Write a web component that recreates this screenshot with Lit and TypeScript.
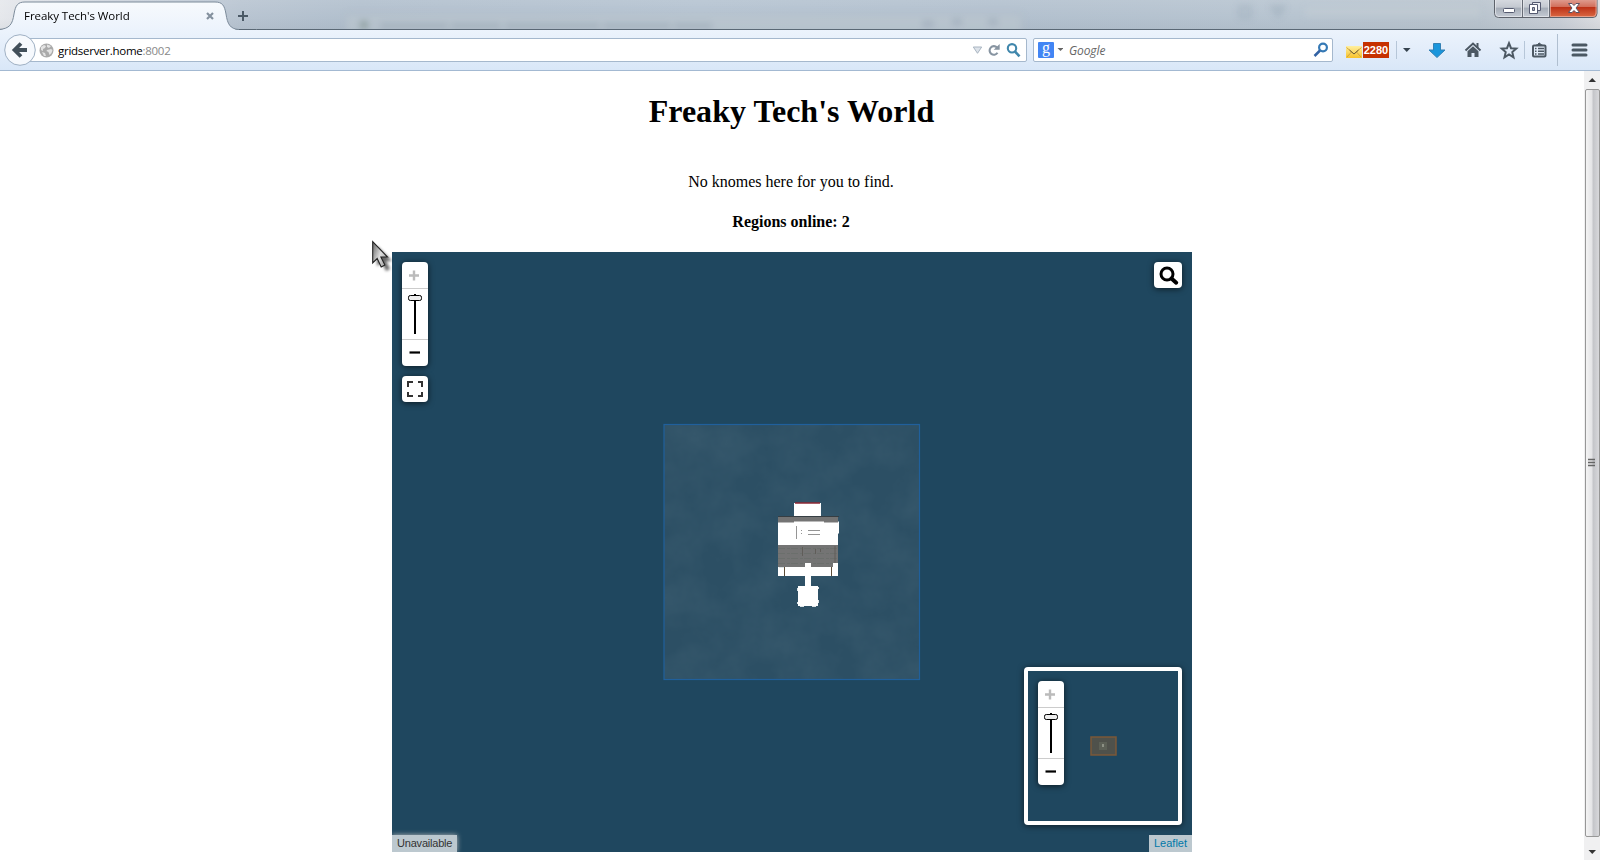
import { LitElement, html, css, svg } from "lit";
import { customElement } from "lit/decorators.js";

/** Zoom in / slider / zoom out stack used by the map and its overview. */
@customElement("zoom-slider")
export class ZoomSlider extends LitElement {
  static styles = css`
    :host {
      display: flex;
      flex-direction: column;
      width: 26px;
      height: 104px;
      background: #fff;
      border-radius: 4px;
      box-shadow: 0 1px 6px rgba(0, 0, 0, 0.65);
    }
    .end { height: 26px; }
    .track { height: 50px; border-top: 1px solid #ccc; border-bottom: 1px solid #ccc; }
    svg { display: block; }
  `;
  render() {
    return html`
      <div class="end">
        <svg width="26" height="26"><path d="M7 13.500h10M12 8.500v10" stroke="#bbb" stroke-width="2.400" fill="none" /></svg>
      </div>
      <div class="track">
        <svg width="26" height="50">
          <path d="M13 5v40" stroke="#000" stroke-width="2" />
          <rect x="6.5" y="6.5" width="13" height="5" rx="1.8" fill="#eee" stroke="#000" />
        </svg>
      </div>
      <div class="end">
        <svg width="26" height="26"><path d="M7.500 12.500h10.500" stroke="#000" stroke-width="2.200" /></svg>
      </div>
    `;
  }
}

@customElement("browser-chrome")
export class BrowserChrome extends LitElement {
  static styles = css`
    :host {
      display: block;
      height: 71px;
      font-family: "Open Sans", "Noto Sans", sans-serif;
      font-size: 12px;
    }
    svg { display: block; flex: none; }
    .strip {
      position: relative;
      height: 30px;
      overflow: hidden;
      display: flex;
      background:
        linear-gradient(180deg, rgba(255, 255, 255, 0.1), rgba(255, 255, 255, 0) 60%, rgba(70, 85, 95, 0.06)),
        linear-gradient(90deg, #e6e8ec 0, #d6dbe2 60px, #b8c4d1 240px, #b1bfcd 360px, #b5c3d1 700px, #b2c0ce 1000px, #b7c4d0 1300px, #b9c4ce 1480px, #c9ced6 1560px, #dcdde1 1600px);
    }
    .ghost { position: absolute; left: 340px; top: 0; }
    .tab { position: relative; width: 240px; height: 30px; display: flex; align-items: center; }
    .shape { position: absolute; left: 0; top: 0; }
    .title {
      position: relative;
      margin-left: 24px;
      width: 182px;
      line-height: 16px;
      padding-top: 2px;
      color: #000;
      font-size: 11.5px;
      letter-spacing: -0.06px;
      white-space: nowrap;
    }
    .x { position: relative; margin-top: 2px; }
    .plus { margin: 10px 0 0 -3px; position: relative; }
    .wins { margin-left: auto; margin-right: 2px; }
    .bar {
      box-sizing: border-box;
      height: 41px;
      border-bottom: 1px solid #a3b9d2;
      background: linear-gradient(#ecf3fc, #d9e7f8);
      display: flex;
      align-items: flex-start;
      padding: 8px 13px 0 4px;
    }
    .back { margin-top: -4px; position: relative; z-index: 1; }
    .field {
      box-sizing: border-box;
      height: 24px;
      border: 1px solid #a5b8cd;
      border-radius: 2px;
      background: #fff;
      display: flex;
      align-items: center;
    }
    .url { width: 1003px; margin-left: -12px; padding-left: 14px; }
    .addr { margin-left: 4px; padding-top: 1px; flex: 1; line-height: 16px; white-space: nowrap; color: #000; font-size: 11.5px; letter-spacing: -0.27px; }
    .port { color: #888; }
    .search { width: 300px; margin-left: 6px; padding-left: 4px; }
    .g {
      width: 16px;
      height: 16px;
      border-radius: 1px;
      background: #4285f4;
      color: #fff;
      font: 16px/12px "Liberation Serif", serif;
      text-align: center;
    }
    .hint { flex: 1; margin-left: 6px; padding-top: 1px; font-style: italic; color: #666; line-height: 16px; letter-spacing: -0.1px; }
    .tools { display: flex; margin-left: 13px; height: 24px; align-items: center; }
    .count {
      width: 26px;
      height: 16px;
      background: #c63100;
      color: #fff;
      font: bold 11px/16px "Liberation Sans", sans-serif;
      text-align: center;
    }
  `;

  private windowButtons() {
    return svg`
      <defs>
        <linearGradient id="wg" x2="0" y2="1"><stop offset="0" stop-color="#dadde3"/><stop offset=".48" stop-color="#c3c8d0"/><stop offset=".5" stop-color="#a4abb6"/><stop offset="1" stop-color="#c6ccd5"/></linearGradient>
        <linearGradient id="wr" x2="0" y2="1"><stop offset="0" stop-color="#e2a79c"/><stop offset=".45" stop-color="#d2705d"/><stop offset=".5" stop-color="#bd3218"/><stop offset="1" stop-color="#da6843"/></linearGradient>
      </defs>
      <path d="M.5 -2V13.5q0 4 4 4H99q4 0 4-4V-2z" fill="url(#wg)" stroke="#5d626b"/>
      <path d="M55.5 -2V17H99q3.500 0 3.500-4V-2z" fill="url(#wr)"/>
      <path d="M1.500 0V13q0 3.500 3 3.500H27.500V0M29.500 0V16.500H54.500V0" fill="none" stroke="#e9ebef" opacity=".7"/>
      <path d="M56.500 0V16.500H99q3 0 3-3.500V0" fill="none" stroke="#eeb5a6" opacity=".7"/>
      <path d="M28.500 0V17M55.500 0V17" stroke="#666b75"/>
      <rect x="9.500" y="8.500" width="11" height="4" rx="1" fill="#fff" stroke="#555a70"/>
      <path d="M38.500 2.500h8v8h-8z" fill="#eceef2" stroke="#555a70"/>
      <path d="M35.500 4.500h8v9h-8z" fill="#fff" stroke="#555a70"/><path d="M38.500 7.500h2v3h-2z" fill="#a9afba" stroke="#555a70"/>
      <path d="M74.500 3.500h3.500l2 2 2-2h3.500l-3.500 4.500 3.500 4.500H82l-2-2-2 2h-3.500l3.500-4.500z" fill="#fff" stroke="#5b5365"/>
    `;
  }

  render() {
    return html`
      <div class="strip">
        <svg class="ghost" width="1240" height="29">
          <defs><filter id="b" x="-20%" y="-100%" width="140%" height="300%"><feGaussianBlur stdDeviation="3" /></filter></defs>
          <g filter="url(#b)">
            <path d="M5 32V18q0-4 4-4H678q4 0 4 4V32" fill="#bdc7cf" opacity=".6" stroke="#8999a9" stroke-opacity=".45" />
            <ellipse cx="24" cy="25" rx="5" ry="5" fill="#7f928f" opacity=".6" />
            <path d="M40 26H372" stroke="#8495a3" stroke-width="7" stroke-dasharray="68 3 50 4 95 3" opacity=".3" />
            <path d="M582 24h12M612 22h10M648 22h10" stroke="#7f91a3" stroke-width="7" opacity=".3" />
            <path d="M900 7h10v10h-10zM932 7h12l-6 9z" stroke="#8294a6" stroke-width="2" fill="none" opacity=".5" />
            <path d="M965 12h175" stroke="#c8d1d8" stroke-width="10" opacity=".35" />
          </g>
        </svg>
        <svg class="shape" width="1600" height="30">
          <defs><linearGradient id="tg" x2="0" y2="1"><stop offset="0" stop-color="#f7fafd" /><stop offset="1" stop-color="#ecf3fc" /></linearGradient></defs>
          <path d="M0 29.5H1600" stroke="#5a6875" />
          <path d="M-2 30C10 29 12.500 24 14 14 15.500 5 18 2 25 2H215C222 2 224.500 5 226 14 227.500 24 230 29 239 30z" fill="url(#tg)" />
          <path d="M-2 29.500C10 29 12.500 24 14 14 15.500 5 18 2 25 2H215C222 2 224.500 5 226 14 227.500 24 230 29 239 29.500" fill="none" stroke="#7c8b9a" stroke-width="1" />
        </svg>
        <div class="tab">
          <div class="title">Freaky Tech's World</div>
          <svg class="x" width="8" height="8"><path d="M1 1l6 6M7 1l-6 6" stroke="#84919e" stroke-width="2.200" /></svg>
        </div>
        <svg class="plus" width="12" height="12"><path d="M1 6h10M6 1v10" stroke="#4b5966" stroke-width="2" /></svg>
        <svg class="wins" width="104" height="18">${this.windowButtons()}</svg>
      </div>
      <div class="bar">
        <svg class="back" width="32" height="32">
          <circle cx="16" cy="16" r="15.300" fill="#f6f9fd" stroke="#9fb0c3" />
          <path d="M23 16H12M17 9.500L10.500 16l6.500 6.500" fill="none" stroke="#424f5a" stroke-width="3.800" />
        </svg>
        <div class="field url">
          <svg width="15" height="15">
            <circle cx="7.500" cy="7.500" r="7" fill="#aaa" />
            <path d="M2 4l3-2 2 1-1 2-2 1 0 2-2-1zM8 1.500l4 1.500-2 2-2-1zM8 7l4-1 1.500 1-1 3-2 2-1-3-2-1zM3 9l3 1 1 3-2 0z" fill="#e3e3e3" />
          </svg>
          <div class="addr">gridserver.home<span class="port">:8002</span></div>
          <svg width="55" height="20">
            <path d="M2.300 7h8.400L6.500 13.300z" fill="#dde3ea" stroke="#a9b5c1" />
            <path d="M26 7.500A4.300 4.300 0 1 0 26.500 12.800" fill="none" stroke="#8794a1" stroke-width="2.100" /><path d="M28.700 4v5.800h-6z" fill="#8794a1" />
            <circle cx="41" cy="8.300" r="4.200" fill="none" stroke="#4087ac" stroke-width="2.100" /><path d="M44 11.500l4.500 4.800" stroke="#4087ac" stroke-width="2.600" />
          </svg>
        </div>
        <div class="field search">
          <div class="g">g</div>
          <svg width="9" height="6"><path d="M3.500 1h6L6.500 4z" fill="#666" /></svg>
          <div class="hint">Google</div>
          <svg width="20" height="18"><circle cx="11" cy="6.500" r="3.900" fill="none" stroke="#3579b5" stroke-width="2.200" /><path d="M8 9.500L2.500 15" stroke="#3262a4" stroke-width="2.500" /></svg>
        </div>
        <div class="tools">
          <svg width="17" height="24">
            <defs><linearGradient id="m" x2="0" y2="1"><stop offset="0" stop-color="#fff0a0" /><stop offset="1" stop-color="#f8c22a" /></linearGradient></defs>
            <rect x="0" y="8" width="16" height="12" fill="url(#m)" /><path d="M.5 9.500L8 16l7.500-6.500M1 19l4.500-5M15 19l-4.500-5" fill="none" stroke="#cfa545" /><path d="M3.500 12L8 16l4.500-4" fill="none" stroke="#6b5c36" />
          </svg>
          <div class="count">2280</div>
          <svg width="191" height="32" viewBox="0 0 191 32">
            <path d="M7.500 7v18M135.500 7v18" stroke="#b6c6d8" />
            <path d="M14 14h7.500l-3.750 4z" fill="#35434e" />
            <path d="M44.500 9.500h7V16h4.500l-8 7.500-8-7.500h4.500z" fill="#1a96dc" stroke="#3380b4" />
            <path d="M76.500 16.500L84 9.500l7.500 7" fill="none" stroke="#4c5863" stroke-width="2" />
            <path d="M84 12.300l5.500 5V23H85.500v-4h-3v4H78.500v-5.700z" fill="#4c5863" /><path d="M87.500 9h2v5h-2z" fill="#4c5863" />
            <path d="M120 9.200l2 5 5.300.4-4 3.500 1.200 5.200-4.500-2.800-4.500 2.800 1.200-5.200-4-3.500 5.300-.4z" fill="none" stroke="#4c5863" stroke-width="2" />
            <path d="M144 12.500q0-1 1-1h10.500q1 0 1 1v9q0 1-1 1H145q-1 0-1-1z" fill="none" stroke="#4c5863" stroke-width="2" />
            <path d="M146.500 11.500l2-1q1.700-3 3.500 0l2 1z" fill="#4c5863" stroke="#4c5863" />
            <path d="M146 14.500h1.500M149 14.500h6M146 17.200h1.500M149 17.200h6M146 20h1.500M149 20h6" stroke="#4c5863" stroke-width="1.400" />
            <path d="M168.500 0v32" stroke="#b0bfd0" />
            <path d="M183.500 11h13M183.500 16h13M183.500 21h13" stroke="#4b5863" />
          </svg>
          <svg width="1" height="32" overflow="visible"><path d="M-7 11h13M-7 16h13M-7 21h13" stroke="#4b5863" stroke-width="3" stroke-linecap="round" /></svg>
        </div>
      </div>
    `;
  }
}

@customElement("region-map")
export class RegionMap extends LitElement {
  static styles = css`
    :host {
      display: block;
      position: relative;
      width: 800px;
      height: 600px;
      background: #1f475f;
      font: 11px/17px "Liberation Sans", sans-serif;
      text-align: left;
    }
    svg { display: block; }
    .region { position: absolute; left: 271px; top: 171px; }
    .zoom { position: absolute; left: 10px; top: 10px; }
    .btn { position: absolute; height: 26px; background: #fff; border-radius: 4px; box-shadow: 0 1px 6px rgba(0, 0, 0, 0.65); }
    .full { left: 10px; top: 124px; width: 26px; }
    .find { right: 10px; top: 10px; width: 28px; }
    .mini {
      position: absolute;
      left: 632px;
      top: 415px;
      width: 150px;
      height: 150px;
      border: 4px solid #fff;
      border-radius: 4px;
      background: #1f475f;
      box-shadow: 0 1px 6px rgba(0, 0, 0, 0.6);
    }
    .outline { position: absolute; left: 62px; top: 65px; }
    .label { position: absolute; bottom: 0; height: 17px; box-sizing: border-box; padding: 0 5px; background: #bcc8cf; color: #333; white-space: nowrap; }
    .coords { left: 0; width: 65px; letter-spacing: -0.2px; box-shadow: 0 0 5px #bbb; clip-path: inset(-8px -8px 0 0); }
    .credit { right: 0; width: 43px; color: #0078a8; }
  `;
  render() {
    return html`
      <svg class="region" width="258" height="258">
        <defs>
          <filter id="t" x="0" y="0" width="100%" height="100%">
            <feTurbulence type="fractalNoise" baseFrequency=".025" numOctaves="4" seed="8" />
            <feColorMatrix values="0 0 0 0 .32  0 0 0 0 .43  0 0 0 0 .48  .9 0 0 0 -.25" />
          </filter>
        </defs>
        <rect x="1" y="1" width="255" height="256" fill="#2c4f64" />
        <rect x="1" y="1" width="255" height="256" filter="url(#t)" opacity=".17" />
        <rect x="1" y="1.500" width="255.500" height="255" fill="none" stroke="#20609c" stroke-width="1.200" />
        <g transform="translate(-663 -423)">
          <path d="M794 503h27v13h-27z" fill="#fff" /><path d="M795 503h25" stroke="#8c2733" stroke-width="1.500" />
          <path d="M778 517h60v50h-60z" fill="#747474" /><path d="M778 516.500h61" stroke="#363e43" />
          <path d="M778 522.500h16v-1h30v1h14v-1h1v12h-1v11.500h-60z" fill="#fff" />
          <path d="M796.500 526v13M801.500 530v1M801.500 533v1M808 530.500h12M808 534.500h12" stroke="#959595" />
          <path d="M778 548.500h60M778 553.500h60M778 558.500h60M778 563.500h60" stroke="#636b66" stroke-dasharray="7 2 3 1" opacity=".5" />
          <path d="M802.500 547v9M815.500 549v5M820.500 549v3M835 546v20" stroke="#605d59" />
          <path d="M778 567h60v9h-60zM833 563h5v5h-5zM805 563h6v24h-6zM798 586h20v20h-20z" fill="#fff" />
          <path d="M784.500 567v9M831.500 567v9" stroke="#5c4c37" />
          <path d="M779 567.500h5M800 606.500h4M812 606.500h4M797.500 588v3M797.500 602v2M818.500 587v2M818.500 600v3" stroke="#dce3e6" />
        </g>
      </svg>
      <zoom-slider class="zoom"></zoom-slider>
      <div class="btn full">
        <svg width="26" height="26"><path d="M6 11V6h5M16 6h4v5M20 16v4h-4M11 20H6v-4" fill="none" stroke="#333" stroke-width="2" /></svg>
      </div>
      <div class="btn find">
        <svg width="28" height="26"><circle cx="13" cy="12" r="6" fill="none" stroke="#000" stroke-width="3" /><path d="M17.500 16.500l4.700 4.200" stroke="#000" stroke-width="4" stroke-linecap="round" /></svg>
      </div>
      <div class="mini">
        <zoom-slider class="zoom"></zoom-slider>
        <svg class="outline" width="27" height="20">
          <rect x="1" y="1" width="25" height="18" fill="#4f514b" stroke="#7b5838" stroke-width="1.500" />
          <rect x="9" y="6" width="8" height="8" fill="#5c6056" /><rect x="12" y="8" width="2" height="3" fill="#8c9084" />
        </svg>
      </div>
      <div class="label coords">Unavailable</div>
      <div class="label credit">Leaflet</div>
    `;
  }
}

@customElement("app-root")
export class AppRoot extends LitElement {
  static styles = css`
    :host { display: block; width: 1600px; height: 860px; overflow: hidden; background: #fff; }
    .view { display: flex; height: 789px; }
    .page {
      flex: 1;
      display: flex;
      flex-direction: column;
      align-items: center;
      font: 16px/18px "Liberation Serif", serif;
      color: #000;
    }
    h1 { margin: 22px 0 0; padding-right: 1px; font-size: 32px; line-height: 37px; letter-spacing: 0.03px; }
    p { margin: 43px 0 22px; padding-right: 2px; }
    h4 { margin: 0 0 21px; padding-right: 2px; font-size: 16px; }
    .scroll { width: 16px; background: #f0f0f1; display: flex; flex-direction: column; align-items: center; }
    .arrow { height: 18px; flex: none; }
    .thumb {
      box-sizing: border-box;
      width: 15px;
      height: 748px;
      border: 1px solid #979797;
      border-radius: 2px;
      background: linear-gradient(90deg, #f4f4f4, #e4e4e6 45%, #c4c5c9 55%, #d8d8db);
      display: flex;
      align-items: center;
      justify-content: center;
    }
    .scroll svg { display: block; }
    .pointer { position: absolute; left: 370px; top: 238px; }
  `;
  render() {
    return html`
      <browser-chrome></browser-chrome>
      <div class="view">
        <div class="page">
          <h1>Freaky Tech's World</h1>
          <p>No knomes here for you to find.</p>
          <h4>Regions online: 2</h4>
          <region-map></region-map>
        </div>
        <div class="scroll">
          <svg class="arrow" width="16" height="18"><path d="M4.500 11h7.500L8.250 7z" fill="#333" /></svg>
          <div class="thumb">
            <svg width="11" height="10"><path d="M1 1.500h7M1 4.500h7M1 7.500h7" stroke="#666" stroke-width="1.600" /></svg>
          </div>
          <svg class="arrow" width="16" height="23"><path d="M4.500 13h7.500l-3.750 4z" fill="#333" /></svg>
        </div>
      </div>
      <svg class="pointer" width="28" height="40">
        <defs>
          <linearGradient id="c" x2="1" y2=".6"><stop offset=".1" stop-color="#777" /><stop offset=".6" stop-color="#ddd" /><stop offset="1" stop-color="#aaa" /></linearGradient>
          <filter id="s" x="-50%" y="-50%" width="200%" height="200%"><feGaussianBlur stdDeviation="1.500" /></filter>
        </defs>
        <path d="M7 8V28l5-3.500 4 8.500 4-2-4-8h6z" fill="#000" opacity=".6" filter="url(#s)" />
        <path d="M2.700 3.500V25l4.500-4.500 4 8.500 3.700-1.900-4-8.100h6.600z" fill="url(#c)" stroke="#222" stroke-width="1.100" />
      </svg>
    `;
  }
}
